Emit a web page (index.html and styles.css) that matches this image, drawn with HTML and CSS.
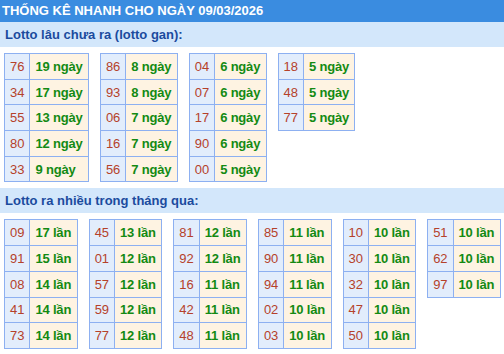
FILE: index.html
```html
<!DOCTYPE html>
<html lang="vi">
<head>
<meta charset="utf-8">
<title>Thống kê nhanh</title>
<link rel="stylesheet" href="styles.css">
</head>
<body>
<div class="page">
  <div class="title">THỐNG KÊ NHANH CHO NGÀY 09/03/2026</div>
  <div class="section">Lotto lâu chưa ra (lotto gan):</div>
  <div class="group">
    <table class="tbl">
      <tr><td class="num">76</td><td class="val">19 ngày</td></tr>
      <tr><td class="num">34</td><td class="val">17 ngày</td></tr>
      <tr><td class="num">55</td><td class="val">13 ngày</td></tr>
      <tr><td class="num">80</td><td class="val">12 ngày</td></tr>
      <tr><td class="num">33</td><td class="val">9 ngày</td></tr>
    </table>
    <table class="tbl">
      <tr><td class="num">86</td><td class="val">8 ngày</td></tr>
      <tr><td class="num">93</td><td class="val">8 ngày</td></tr>
      <tr><td class="num">06</td><td class="val">7 ngày</td></tr>
      <tr><td class="num">16</td><td class="val">7 ngày</td></tr>
      <tr><td class="num">56</td><td class="val">7 ngày</td></tr>
    </table>
    <table class="tbl">
      <tr><td class="num">04</td><td class="val">6 ngày</td></tr>
      <tr><td class="num">07</td><td class="val">6 ngày</td></tr>
      <tr><td class="num">17</td><td class="val">6 ngày</td></tr>
      <tr><td class="num">90</td><td class="val">6 ngày</td></tr>
      <tr><td class="num">00</td><td class="val">5 ngày</td></tr>
    </table>
    <table class="tbl">
      <tr><td class="num">18</td><td class="val">5 ngày</td></tr>
      <tr><td class="num">48</td><td class="val">5 ngày</td></tr>
      <tr><td class="num">77</td><td class="val">5 ngày</td></tr>
    </table>
  </div>
  <div class="section">Lotto ra nhiều trong tháng qua:</div>
  <div class="group group-times">
    <table class="tbl">
      <tr><td class="num">09</td><td class="val">17 lần</td></tr>
      <tr><td class="num">91</td><td class="val">15 lần</td></tr>
      <tr><td class="num">08</td><td class="val">14 lần</td></tr>
      <tr><td class="num">41</td><td class="val">14 lần</td></tr>
      <tr><td class="num">73</td><td class="val">14 lần</td></tr>
    </table>
    <table class="tbl">
      <tr><td class="num">45</td><td class="val">13 lần</td></tr>
      <tr><td class="num">01</td><td class="val">12 lần</td></tr>
      <tr><td class="num">57</td><td class="val">12 lần</td></tr>
      <tr><td class="num">59</td><td class="val">12 lần</td></tr>
      <tr><td class="num">77</td><td class="val">12 lần</td></tr>
    </table>
    <table class="tbl">
      <tr><td class="num">81</td><td class="val">12 lần</td></tr>
      <tr><td class="num">92</td><td class="val">12 lần</td></tr>
      <tr><td class="num">16</td><td class="val">11 lần</td></tr>
      <tr><td class="num">42</td><td class="val">11 lần</td></tr>
      <tr><td class="num">48</td><td class="val">11 lần</td></tr>
    </table>
    <table class="tbl">
      <tr><td class="num">85</td><td class="val">11 lần</td></tr>
      <tr><td class="num">90</td><td class="val">11 lần</td></tr>
      <tr><td class="num">94</td><td class="val">11 lần</td></tr>
      <tr><td class="num">02</td><td class="val">10 lần</td></tr>
      <tr><td class="num">03</td><td class="val">10 lần</td></tr>
    </table>
    <table class="tbl">
      <tr><td class="num">10</td><td class="val">10 lần</td></tr>
      <tr><td class="num">30</td><td class="val">10 lần</td></tr>
      <tr><td class="num">32</td><td class="val">10 lần</td></tr>
      <tr><td class="num">47</td><td class="val">10 lần</td></tr>
      <tr><td class="num">50</td><td class="val">10 lần</td></tr>
    </table>
    <table class="tbl">
      <tr><td class="num">51</td><td class="val">10 lần</td></tr>
      <tr><td class="num">62</td><td class="val">10 lần</td></tr>
      <tr><td class="num">97</td><td class="val">10 lần</td></tr>
    </table>
  </div>
</div>
</body>
</html>
```

FILE: styles.css
```css
html, body {
  margin: 0;
  padding: 0;
  background: #ffffff;
}

.page {
  font-family: "Liberation Sans", Arial, sans-serif;
  font-size: 13px;
}

.title {
  height: 22px;
  line-height: 22px;
  padding-left: 2px;
  background: #3a8ce0;
  color: #ffffff;
  font-weight: bold;
  font-size: 13px;
  white-space: nowrap;
  overflow: hidden;
}

.section {
  height: 25px;
  line-height: 26px;
  padding-left: 5px;
  background: #d3e7fb;
  color: #1b4b9e;
  font-weight: bold;
  font-size: 13px;
}

.group {
  display: flex;
  flex-wrap: wrap;
  align-items: flex-start;
  gap: 11px;
  padding: 6px 4px 6px 4px;
}

.group-times {
  padding-right: 0;
}

.tbl {
  border-collapse: collapse;
}

.tbl td {
  border: 1px solid #8db0f1;
  padding: 4.85px 5px;
  line-height: 15px;
  white-space: nowrap;
}

.tbl td.num {
  background: #e2edfc;
  color: #b5412a;
  text-align: center;
}

.tbl td.val {
  background: #fef3e2;
  color: #138a13;
  font-weight: bold;
  text-align: left;
  letter-spacing: -0.2px;
  padding-left: 5px;
  padding-right: 5.4px;
}

.group-times .tbl td.val {
  padding-right: 5.5px;
}
```
